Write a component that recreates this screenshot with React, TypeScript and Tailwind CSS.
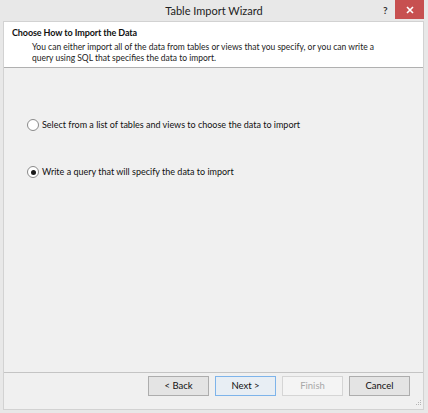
import React from "react";

const font = { fontFamily: 'Lato, "Open Sans", Arial, sans-serif' };

function Radio({ checked }: { checked?: boolean }) {
  return (
    <span className="w-[12px] h-[12px] rounded-full border border-[#8a8a8a] bg-white flex items-center justify-center shrink-0">
      {checked && <span className="w-[5px] h-[5px] rounded-full bg-[#1a1a1a]" />}
    </span>
  );
}

function Btn({ children, primary, disabled }: { children: React.ReactNode; primary?: boolean; disabled?: boolean }) {
  return (
    <div
      className={
        "w-[61px] h-[20px] flex items-center justify-center text-[9.5px] border " +
        (primary
          ? "border-[#7eb4ea] bg-[#e8eef4] text-[#111]"
          : disabled
          ? "border-[#d5d5d5] bg-[#f4f4f4] text-[#a8a8a8]"
          : "border-[#adadad] bg-[#e4e4e4] text-[#111]")
      }
    >
      {children}
    </div>
  );
}

export default function App() {
  return (
    <div className="w-[428px] h-[413px] bg-[#e8e8e8] flex flex-col overflow-hidden" style={font}>
      <div className="h-[21px] relative flex items-center justify-center shrink-0">
        <span className="text-[11px] text-[#222] mt-[2px]">Table Import Wizard</span>
        <span className="absolute left-[383px] top-[3px] text-[10px] font-bold text-[#333]">?</span>
        <div className="absolute left-[395px] top-0 w-[29px] h-[19px] bg-[#c75050] flex items-center justify-center">
          <svg width="8" height="8" viewBox="0 0 8 8">
            <path d="M1 1 L7 7 M7 1 L1 7" stroke="white" strokeWidth="1.6" />
          </svg>
        </div>
      </div>
      <div className="flex-1 ml-[3px] mr-[4px] mb-[3px] border border-[#d2d2d2] flex flex-col">
        <div className="h-[46px] bg-white border-b border-[#b0b0b0] pl-[8px] pt-[4px] shrink-0">
          <div className="text-[9px] font-bold text-[#111] leading-[13px] tracking-[-0.1px]">Choose How to Import the Data</div>
          <div className="pl-[20px] text-[8.5px] text-[#222] leading-[11px] mt-[3px] whitespace-nowrap">
            You can either import all of the data from tables or views that you specify, or you can write a
            <br />
            query using SQL that specifies the data to import.
          </div>
        </div>
        <div className="flex-1 bg-[#f0f0f0] flex flex-col pl-[23px] pt-[50px]">
          <div className="flex items-center gap-[3px] h-[14px]">
            <Radio />
            <span className="text-[9px] text-[#111]">Select from a list of tables and views to choose the data to import</span>
          </div>
          <div className="flex items-center gap-[3px] h-[14px] mt-[33px]">
            <Radio checked />
            <span className="text-[9px] text-[#111]">Write a query that will specify the data to import</span>
          </div>
        </div>
        <div className="h-[37px] bg-[#f0f0f0] border-t border-[#c4c4c4] flex items-start justify-end gap-[6px] pr-[13px] pt-[3px] shrink-0 relative">
          <Btn>&lt; Back</Btn>
          <Btn primary>Next &gt;</Btn>
          <Btn disabled>Finish</Btn>
          <Btn>Cancel</Btn>
          <svg className="absolute right-[1px] bottom-[1px]" width="10" height="10" viewBox="0 0 10 10">
            <rect x="8" y="2" width="1" height="1" fill="#b5b5b5" />
            <rect x="6" y="4" width="1" height="1" fill="#b5b5b5" />
            <rect x="8" y="4" width="1" height="1" fill="#b5b5b5" />
            <rect x="4" y="6" width="1" height="1" fill="#b5b5b5" />
            <rect x="6" y="6" width="1" height="1" fill="#b5b5b5" />
            <rect x="8" y="6" width="1" height="1" fill="#b5b5b5" />
          </svg>
        </div>
      </div>
    </div>
  );
}
